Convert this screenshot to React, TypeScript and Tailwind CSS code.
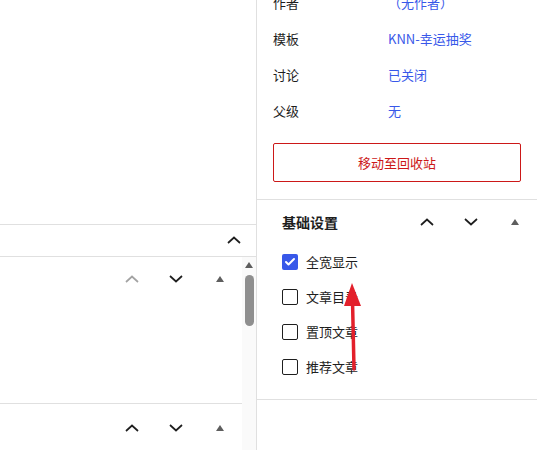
import { Check } from 'lucide-react'

const font = { fontFamily: '"Noto Sans CJK SC", "Noto Sans", sans-serif' }

function ChevronUp({ muted = false }: { muted?: boolean }) {
  return (
    <svg width="14" height="8" viewBox="0 0 14 8" aria-hidden>
      <polyline
        points="1,7 7,1.5 13,7"
        fill="none"
        stroke={muted ? '#a3a3a3' : '#1e1e1e'}
        strokeWidth="1.7"
      />
    </svg>
  )
}

function ChevronDown() {
  return (
    <svg width="14" height="8" viewBox="0 0 14 8" aria-hidden>
      <polyline points="1,1 7,6.5 13,1" fill="none" stroke="#1e1e1e" strokeWidth="1.7" />
    </svg>
  )
}

function Caret() {
  return (
    <svg width="8" height="6" viewBox="0 0 8 6" aria-hidden>
      <polygon points="0,6 4,0 8,6" fill="#5e5e5e" />
    </svg>
  )
}

function MoveButtons({ mutedUp = false }: { mutedUp?: boolean }) {
  return (
    <div className="flex">
      <button type="button" className="flex h-[44px] w-[44px] items-center justify-center">
        <ChevronUp muted={mutedUp} />
      </button>
      <button type="button" className="flex h-[44px] w-[44px] items-center justify-center">
        <ChevronDown />
      </button>
      <button type="button" className="flex h-[44px] w-[44px] items-center justify-center">
        <Caret />
      </button>
    </div>
  )
}

const meta = [
  { label: '作者', value: '（无作者）' },
  { label: '模板', value: 'KNN-幸运抽奖' },
  { label: '讨论', value: '已关闭' },
  { label: '父级', value: '无' },
]

const options = [
  { label: '全宽显示', checked: true },
  { label: '文章目录', checked: false },
  { label: '置顶文章', checked: false },
  { label: '推荐文章', checked: false },
]

export default function App() {
  return (
    <div
      className="relative flex h-[450px] w-[537px] overflow-hidden bg-white text-[13px] text-[#1e1e1e]"
      style={font}
    >
      {/* left editor column */}
      <div className="flex w-[256px] shrink-0 flex-col">
        <div className="h-[228px] border-b border-[#e0e0e0]" />
        <div className="flex h-[33px] items-center justify-end border-b border-[#e0e0e0]">
          <div className="flex w-[44px] justify-center">
            <ChevronUp />
          </div>
        </div>
        <div className="flex flex-1">
          <div className="flex w-[242px] flex-col">
            <div className="flex h-[147px] justify-end border-b border-[#e0e0e0]">
              <MoveButtons mutedUp />
            </div>
            <div className="flex justify-end pt-[2px]">
              <MoveButtons />
            </div>
          </div>
          <div className="flex w-[14px] flex-col items-center bg-[#fafafa] pt-[5px]">
            <Caret />
            <div className="mt-[7px] h-[51px] w-[9px] rounded-full bg-[#8f8f8f]" />
          </div>
        </div>
      </div>

      {/* right sidebar */}
      <div className="flex flex-1 flex-col border-l border-[#e0e0e0]">
        <div className="border-b border-[#e0e0e0] px-4 pb-[17px]">
          <div className="-mt-[15px]">
            {meta.map((row) => (
              <div key={row.label} className="flex h-9 items-center">
                <span className="w-[115px]">{row.label}</span>
                <span className="text-[#3858e9]">{row.value}</span>
              </div>
            ))}
          </div>
          <button
            type="button"
            className="mt-[14px] flex h-[39px] w-full items-center justify-center rounded-[2px] border border-[#cc1818] text-[#cc1818]"
          >
            移动至回收站
          </button>
        </div>

        <div className="border-b border-[#e0e0e0] pb-[15px]">
          <div className="flex h-[44px] items-center justify-between pl-[25px]">
            <span className="text-[14px] font-semibold">基础设置</span>
            <MoveButtons />
          </div>
          {options.map((opt) => (
            <div key={opt.label} className="flex h-[35px] items-center gap-2 pl-[25px]">
              {opt.checked ? (
                <span className="flex h-4 w-4 items-center justify-center rounded-[2px] bg-[#3858e9]">
                  <Check className="h-3 w-3 text-white" strokeWidth={4} />
                </span>
              ) : (
                <span className="h-4 w-4 rounded-[2px] border-[1.5px] border-[#1e1e1e]" />
              )}
              <span>{opt.label}</span>
            </div>
          ))}
        </div>
      </div>

      {/* annotation arrow */}
      <svg
        className="pointer-events-none absolute left-[338px] top-[278px]"
        width="30"
        height="96"
        viewBox="0 0 30 96"
        aria-hidden
      >
        <line x1="16" y1="91" x2="14.5" y2="22" stroke="#e3202b" strokeWidth="3.5" strokeLinecap="round" />
        <polygon points="14,5 23,28 6,28" fill="#e3202b" />
      </svg>
    </div>
  )
}
